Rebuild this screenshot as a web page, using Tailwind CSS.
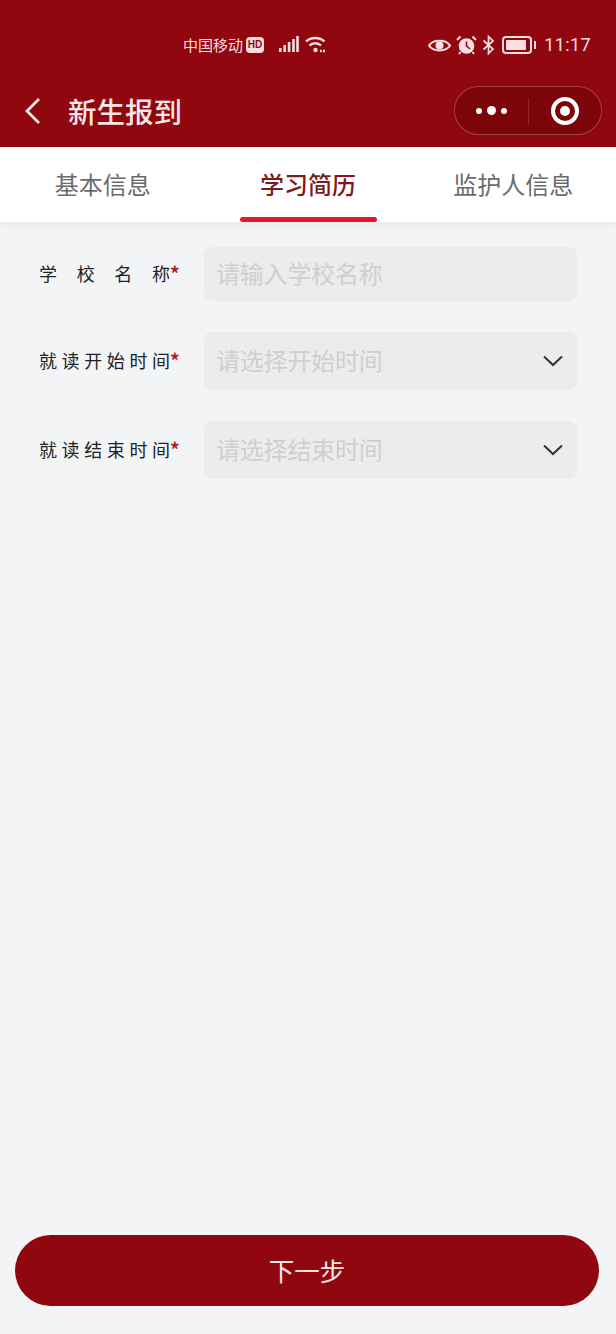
<!DOCTYPE html>
<html lang="zh-CN">
<head>
  <meta charset="UTF-8"/>
  <meta name="viewport" content="width=device-width, initial-scale=1.0"/>
  <title>新生报到</title>
  <script src="https://cdn.jsdelivr.net/npm/@tailwindcss/browser@4"></script>
</head>
<body class="bg-[#f3f4f6] font-['Noto_Sans_CJK_SC','Noto_Sans',sans-serif]">
<div class="w-[616px] h-[1334px] flex flex-col overflow-hidden">

  <!-- status bar + nav -->
  <header class="h-[147px] bg-[#90070f] text-white shrink-0">
    <div class="h-[74px] pt-[33px] flex items-start text-[#f6dfe0]">
      <div class="ml-[183px] flex items-center h-[24px]">
        <span class="text-[15px] leading-[24px] w-[60px] whitespace-nowrap">中国移动</span>
        <span class="ml-[3px] w-[18px] h-[16px] rounded-[4px] bg-[#f6dfe0] text-[#90070f] text-[10px] font-bold leading-[16px] text-center font-['Liberation_Sans',sans-serif]">HD</span>
        <svg class="ml-[15px]" width="20" height="18" viewBox="0 0 20 18" fill="#f6dfe0">
          <rect x="0" y="12" width="2.6" height="4"/><rect x="4.400" y="9" width="2.600" height="7"/><rect x="8.800" y="6" width="2.600" height="10"/><rect x="13.200" y="3" width="2.600" height="13"/><rect x="17.200" y="0" width="2.600" height="16"/>
        </svg>
        <svg class="ml-[6px]" width="21" height="18" viewBox="0 0 21 18" fill="none" stroke="#f6dfe0" stroke-width="2.400">
          <path d="M1 5.500C6 0.800 14.500 0.800 19.500 5.500"/><path d="M4.500 9.500C7.500 6.500 13 6.500 16 9.500"/><circle cx="10.500" cy="14" r="2.200" fill="#f6dfe0" stroke="none"/><path d="M15 15h1.800M18 15h2" stroke-width="2.400"/>
        </svg>
      </div>
      <div class="ml-auto mr-[25px] flex items-center h-[24px]">
        <svg width="23" height="15" viewBox="0 0 23 15">
          <path d="M1 7.500C5 1 18 1 22 7.500C18 14 5 14 1 7.500Z" fill="none" stroke="#f6dfe0" stroke-width="2"/><circle cx="11.500" cy="7.500" r="4" fill="#f6dfe0"/>
        </svg>
        <svg class="ml-[5px]" width="21" height="20" viewBox="0 0 21 20">
          <circle cx="10.500" cy="11" r="7.800" fill="#f6dfe0"/><path d="M10.500 6.500V11L14 14" fill="none" stroke="#90070f" stroke-width="1.600"/><path d="M1 5L4.500 1.500M20 5L16.500 1.500M4.500 17L3 19M16.500 17L18 19" stroke="#f6dfe0" stroke-width="2"/>
        </svg>
        <svg class="ml-[5px]" width="13" height="20" viewBox="0 0 13 20" fill="none" stroke="#f6dfe0" stroke-width="1.700">
          <path d="M1.500 5.500L11 14L6.500 18.500V1.500L11 6L1.500 14.500"/>
        </svg>
        <div class="ml-[7px] w-[30px] h-[18px] rounded-[4px] border-2 border-[#f6dfe0] p-[2px]">
          <div class="w-[20px] h-full bg-[#f6dfe0] rounded-[1px]"></div>
        </div>
        <div class="ml-[2px] w-[2px] h-[8px] bg-[#f6dfe0]"></div>
        <span class="ml-[8px] text-[18px] leading-[24px] font-['Roboto',sans-serif] tracking-[0.4px]">11:17</span>
      </div>
    </div>
    <div class="h-[73px] flex items-center relative">
      <svg class="ml-[24px]" width="18" height="28" viewBox="0 0 18 28" fill="none" stroke="#f8e6e7" stroke-width="2.800">
        <path d="M15 2L3 14L15 26"/>
      </svg>
      <h1 class="ml-[26px] text-[28.500px] leading-[40px] font-medium text-[#f8e6e7] whitespace-nowrap">新生报到</h1>
      <div class="absolute left-[454px] top-[12px] w-[148px] h-[49px] rounded-full bg-[#7b0509] border border-white/25 flex items-center">
        <div class="w-[73px] flex items-center justify-center gap-[5px]">
          <span class="w-[6px] h-[6px] rounded-full bg-white"></span>
          <span class="w-[9px] h-[9px] rounded-full bg-white"></span>
          <span class="w-[6px] h-[6px] rounded-full bg-white"></span>
        </div>
        <div class="w-px h-[26px] bg-white/15"></div>
        <div class="flex-1 flex items-center justify-center">
          <div class="w-[28px] h-[28px] rounded-full border-[4px] border-white flex items-center justify-center">
            <div class="w-[10px] h-[10px] rounded-full bg-white"></div>
          </div>
        </div>
      </div>
    </div>
  </header>

  <!-- tabs -->
  <nav class="h-[75px] bg-white grid grid-cols-3 shrink-0 shadow-[0_4px_8px_rgba(0,0,0,0.04)]">
    <div class="flex justify-center pt-[19px] text-[24px] leading-[36px] text-[#6b6b6b]">基本信息</div>
    <div class="relative flex justify-center pt-[19px] text-[24px] leading-[36px] font-medium text-[#7d1a20]">
      学习简历
      <div class="absolute left-[35px] bottom-0 w-[137px] h-[5px] rounded-full bg-[#dc1c2c]"></div>
    </div>
    <div class="flex justify-center pt-[19px] text-[24px] leading-[36px] text-[#6b6b6b]">监护人信息</div>
  </nav>

  <!-- form -->
  <main class="flex-1 pt-[25px] pl-[39px] pr-[39px]">
    <div class="flex items-center h-[54px]">
      <div class="-mt-[2px] w-[131px] flex justify-between text-[18px] text-[#222]"><span>学</span><span>校</span><span>名</span><span>称</span></div>
      <span class="-mt-[2px] w-[34px] text-[19px] font-bold text-[#b51c28]">*</span>
      <div class="flex-1 h-full rounded-[8px] bg-[#ececed] pl-[12px] flex items-center text-[24px] text-[#cfcfd0]"><span class="-mt-[2px] tracking-[-0.200px]">请输入学校名称</span></div>
    </div>
    <div class="flex items-center h-[58px] mt-[31px]">
      <div class="-mt-[2px] w-[131px] flex justify-between text-[18px] text-[#222]"><span>就</span><span>读</span><span>开</span><span>始</span><span>时</span><span>间</span></div>
      <span class="-mt-[2px] w-[34px] text-[19px] font-bold text-[#b51c28]">*</span>
      <div class="flex-1 h-full rounded-[8px] bg-[#ececed] pl-[12px] pr-[14px] flex items-center justify-between text-[24px] text-[#cfcfd0]">
        <span class="-mt-[2px] tracking-[-0.200px]">请选择开始时间</span>
        <svg width="20" height="12" viewBox="0 0 20 12" fill="none" stroke="#333" stroke-width="2"><path d="M1 1.500L10 10L19 1.500"/></svg>
      </div>
    </div>
    <div class="flex items-center h-[58px] mt-[31px]">
      <div class="-mt-[2px] w-[131px] flex justify-between text-[18px] text-[#222]"><span>就</span><span>读</span><span>结</span><span>束</span><span>时</span><span>间</span></div>
      <span class="-mt-[2px] w-[34px] text-[19px] font-bold text-[#b51c28]">*</span>
      <div class="flex-1 h-full rounded-[8px] bg-[#ececed] pl-[12px] pr-[14px] flex items-center justify-between text-[24px] text-[#cfcfd0]">
        <span class="-mt-[2px] tracking-[-0.200px]">请选择结束时间</span>
        <svg width="20" height="12" viewBox="0 0 20 12" fill="none" stroke="#333" stroke-width="2"><path d="M1 1.500L10 10L19 1.500"/></svg>
      </div>
    </div>
  </main>

  <!-- next -->
  <div class="pl-[15px] pr-[17px] pb-[28px] shrink-0">
    <button class="w-full h-[71px] rounded-full bg-[#90070f] text-[#f8e6e7] text-[25.500px]">下一步</button>
  </div>
</div>
</body>
</html>
